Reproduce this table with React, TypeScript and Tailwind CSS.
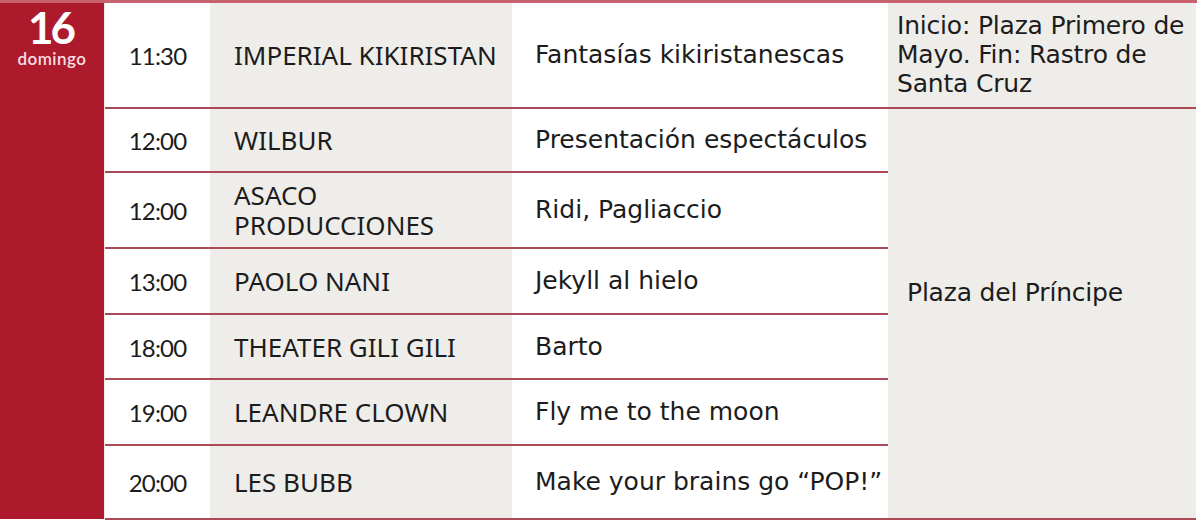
import React from "react";

type Row = { h: string; time: string; artist: React.ReactNode; title: string };

const rows: Row[] = [
  { h: "h-[106px]", time: "11:30", artist: "IMPERIAL KIKIRISTAN", title: "Fantasías kikiristanescas" },
  { h: "h-[64px]", time: "12:00", artist: "WILBUR", title: "Presentación espectáculos" },
  { h: "h-[76px]", time: "12:00", artist: (<>ASACO<br />PRODUCCIONES</>), title: "Ridi, Pagliaccio" },
  { h: "h-[66px]", time: "13:00", artist: "PAOLO NANI", title: "Jekyll al hielo" },
  { h: "h-[65px]", time: "18:00", artist: "THEATER GILI GILI", title: "Barto" },
  { h: "h-[66px]", time: "19:00", artist: "LEANDRE CLOWN", title: "Fly me to the moon" },
  { h: "h-[74px]", time: "20:00", artist: "LES BUBB", title: "Make your brains go “POP!”" },
];

export default function App() {
  return (
    <div className="w-[1200px] h-[523px] bg-white overflow-hidden font-['Lato','Noto_Sans',sans-serif] text-[#1c1c1c]">
      <div className="h-[3px] w-[1197px] bg-[#c9606d]" />
      <div className="flex">
        <div className="w-[104px] h-[516px] bg-[#ad1a2c] flex flex-col items-center pt-[6px]">
          <span className="text-[44px] leading-[36px] font-bold text-white tracking-[-3px] pr-[3px]">16</span>
          <span className="text-[17px] leading-[17px] font-semibold text-[#f6dfe2] tracking-[0.5px] mt-[5px]">domingo</span>
        </div>
        <div className="w-px bg-[#f3e6e8]" />
        <div className="grid grid-cols-[105px_302px_376px_308px] w-[1091px]">
          {rows.map((r, i) => (
            <React.Fragment key={i}>
              <div className={`${r.h} bg-white border-b-2 border-[#ad4a58] flex items-center justify-center text-[24px] tracking-[-0.8px] pt-[2px]`}>
                {r.time}
              </div>
              <div className={`${r.h} bg-[#efede9] border-b-2 border-[#ad4a58] flex items-center pl-[24px] text-[26px] leading-[30px] font-['Noto_Sans',sans-serif]`}>
                {r.artist}
              </div>
              <div className={`${r.h} bg-white border-b-2 border-[#ad4a58] flex items-center pl-[23px] text-[25px] font-['DejaVu_Sans',sans-serif]`}>
                {r.title}
              </div>
              {i === 0 && (
                <div className="h-[106px] bg-[#efede9] border-b-2 border-[#ad4a58] pl-[9px] pt-[8px] text-[25px] leading-[29px] font-['DejaVu_Sans',sans-serif] tracking-[-0.2px]">
                  Inicio: Plaza Primero de Mayo. Fin: Rastro de Santa Cruz
                </div>
              )}
              {i === 1 && (
                <div className="row-span-6 bg-[#efede9] border-b-2 border-[#ad4a58] flex items-center pl-[19px] pb-[42px] text-[25px] font-['DejaVu_Sans',sans-serif] tracking-[-0.2px]">
                  Plaza del Príncipe
                </div>
              )}
            </React.Fragment>
          ))}
        </div>
      </div>
    </div>
  );
}
